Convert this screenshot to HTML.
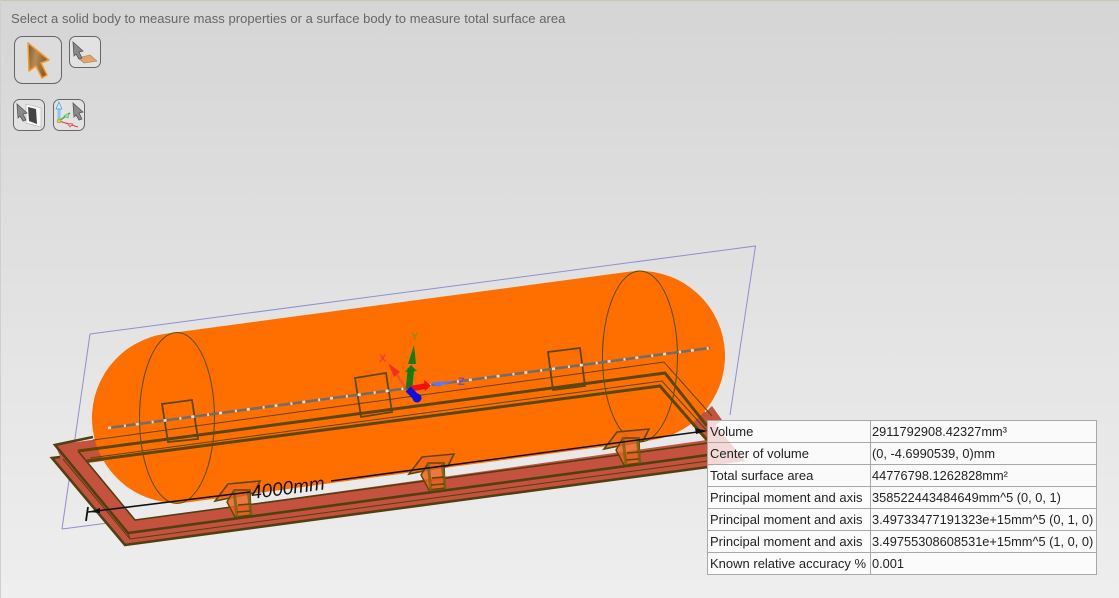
<!DOCTYPE html>
<html><head><meta charset="utf-8">
<style>
html,body{margin:0;padding:0}
body{width:1119px;height:598px;overflow:hidden;position:relative;background:linear-gradient(#d5d5d5 0,#dedede 35%,#e6e6e6 65%,#eeeeee 100%);font-family:"Liberation Sans",sans-serif}
#edge{position:absolute;left:0;top:0;width:1119px;height:1px;background:#c9c5ae}
#edgel{position:absolute;left:0;top:0;width:1px;height:598px;background:#d0d0c8}
#msg{position:absolute;left:11px;top:11px;font-size:13px;color:#666;white-space:nowrap;letter-spacing:.04px}
svg{position:absolute;left:0;top:0}
table{position:absolute;left:707px;top:420px;width:390px;border-collapse:collapse;table-layout:fixed;background:rgba(255,255,255,.78);font-size:13px;color:#222}
td{border:1px solid #a8a8a8;padding:1px 0 0 2px;box-sizing:border-box;height:22px;white-space:nowrap;overflow:hidden;line-height:20px}
td:first-child{width:163px}
td+td{font-size:12.8px;padding-left:1px}
</style></head><body>
<div id="edge"></div><div id="edgel"></div>
<div id="msg">Select a solid body to measure mass properties or a surface body to measure total surface area</div>
<svg width="1119" height="598" viewBox="0 0 1119 598">
<defs>
<linearGradient id="ag" x1="0" y1="0" x2="1" y2="0.3"><stop offset="0" stop-color="#7a5a30"/><stop offset=".45" stop-color="#b98a52"/><stop offset="1" stop-color="#80592c"/></linearGradient>
<g id="br">
<path d="M228 484 L260 481 L254 493 L215 501 Z" fill="rgba(240,105,20,.85)" stroke="#5c4700" stroke-width="1.600"/>
<path d="M227 502 L235 517 L251 515 L250 490 L234 490 Z" fill="rgba(235,100,30,.85)" stroke="#5c4700" stroke-width="1.400"/>
<path d="M234 490 L237 517 M248 489 L251 515" fill="none" stroke="#7a6010" stroke-width="3" opacity=".8"/>
<path d="M238 505 L250 504 M237 512 L250 511" fill="none" stroke="#5c4700" stroke-width="1.500"/>
</g></defs>
<!-- buttons -->
<g fill="none" stroke="#666" stroke-width="1">
<rect x="14.500" y="36.500" width="47" height="47" rx="8" fill="#dcdcdc"/>
<rect x="69.500" y="36.500" width="31" height="31" rx="6" fill="#e2e2e2"/>
<rect x="13.500" y="99.500" width="31" height="31" rx="6" fill="#e2e2e2"/>
<rect x="53.500" y="99.500" width="31" height="31" rx="6" fill="#e2e2e2"/>
</g>
<path d="M28 43 L49 60 L41 63 L47 75 L42 78 L36 66 L29 71 Z" fill="url(#ag)" stroke="#f29a2e" stroke-width="1.500" stroke-linejoin="round"/>
<path d="M78 58 L90 55 L97 61 L84 63 Z" fill="#e0a66c" stroke="#b08050" stroke-width=".6"/>
<path d="M73 42 L83 51 L79 52 L82 58 L79 59 L76 54 L74 56 Z" fill="#8a8a8a" stroke="#555" stroke-width=".8"/>
<path d="M26 104 L41 108 L41 127 L26 123 Z" fill="#fafafa" stroke="#aaa" stroke-width=".6"/>
<path d="M28 107 L36 109 L37 124 L29 121 Z" fill="#444"/>
<path d="M17 104 L27 113 L23 114 L26 120 L23 121 L20 116 L18 118 Z" fill="#8a8a8a" stroke="#555" stroke-width=".8"/>
<path d="M59 120 L59 107" stroke="#4a9bd8" stroke-width="2.500" fill="none"/>
<path d="M59 120 L59 107" stroke="#d8eefa" stroke-width="1" fill="none"/>
<path d="M56 109 L59 102 L62 109 Z" fill="#cfe8f8" stroke="#4a9bd8" stroke-width=".7"/>
<path d="M59 121 L70 113" stroke="#48b050" stroke-width="1.500" fill="none"/>
<path d="M64 116 L69 113 L68 118 Z" fill="#a8e0a8" stroke="#48b050" stroke-width=".6"/>
<path d="M59 121 L78 127" stroke="#d84040" stroke-width="1" fill="none"/>
<path d="M67 123 L73 124 L70 127 Z" fill="#f0a8a8" stroke="#d84040" stroke-width=".6"/>
<circle cx="59" cy="121" r="2" fill="#e6d020" stroke="#887" stroke-width=".5"/>
<path d="M73 103 L83 112 L79 113 L82 119 L79 120 L76 115 L74 117 Z" fill="#8a8a8a" stroke="#555" stroke-width=".8"/>

<!-- plane -->
<path d="M90 334 L755.500 246 L730 415 M62 529 L90 334 M62 529 L108 523" fill="none" stroke="#8f8fd0" stroke-width="1"/>

<!-- frame plates -->
<path fill-rule="evenodd" d="M55 445 L664 362 L745 461 L125 545 L52 458 L60 456 Z M88 463 L660 386 L707 440 L135 520 Z" fill="#c4523f"/>
<g fill="none" stroke="#4f4010">
<path d="M60 457 L52 458 L125 545 L708 467" stroke-width="2.600"/>
<path d="M93 437 L55 445 L128 533 L708 455" stroke-width="2.600"/>
<path d="M63 459 L130 539 L708 461 M128 533 L130 539" stroke-width="1"/>
<path d="M78 451 L135 520 L708 443" stroke-width="1.600"/>
</g>

<!-- capsule -->
<path d="M177 418 L640 356" stroke="#ff6f00" stroke-width="170" stroke-linecap="round" fill="none"/>
<path d="M696 421 L712 406 L722 420 L707 432 Z" fill="#c4523f"/>

<!-- lines over capsule -->
<g fill="none" stroke="#5c4700">
<path d="M78 451 L665 373 L707 426" stroke-width="3"/>
<path d="M87 461 L660 386 L707 440" stroke-width="3"/>
<path d="M93 440 L664 362 L712 416" stroke-width="1"/>
<path d="M90 458 L662 381 L708 432" stroke-width="1"/>
<ellipse cx="177" cy="418" rx="37.500" ry="85.500" stroke="#5e5000" stroke-width="1.100"/>
<ellipse cx="640" cy="356.500" rx="37.500" ry="85.500" stroke="#5e5000" stroke-width="1.100"/>
<path d="M162 404 L192 400 L198 439 L168 442 Z" stroke-width="1.800"/>
<path d="M355 378 L386 373 L392 412 L361 417 Z" stroke-width="1.800"/>
<path d="M548 352 L580 348 L585 386 L553 390 Z" stroke-width="1.800"/>
</g>

<!-- axis -->
<path d="M108 428 L710 348" stroke="#6e6e6e" stroke-width="2.600" fill="none"/>
<path d="M108 428 L710 348" stroke="#eedfc8" stroke-width="2.600" fill="none" stroke-dasharray="3 13 2 10"/>

<!-- brackets -->
<use href="#br"/>
<use href="#br" transform="translate(194 -27)"/>
<use href="#br" transform="translate(389 -52)"/>

<!-- dimension -->
<path d="M88 512 L250 492 M331 481 L705 431" stroke="#111" stroke-width="1.500" fill="none"/>
<path d="M88 507 L86 521" stroke="#111" stroke-width="1.800"/>
<path d="M89 512 L100 508 L100 513 Z M707 431 L695 428 L696 434 Z" fill="#111"/>
<text x="252" y="499" transform="rotate(-7.500 252 499)" font-family="Liberation Sans, sans-serif" font-style="italic" font-size="19" fill="#111">4000mm</text>

<!-- triad -->
<path d="M392 368 L406 388" stroke="#f2542a" stroke-width="2.500" fill="none"/>
<path d="M388 363 L400 372 L394 377 Z" fill="#f03020"/>
<path d="M409 389 L411 368" stroke="#0e7f10" stroke-width="6.500" fill="none"/>
<path d="M405 372 L411 365 L417 371 Z" fill="#0e7f10"/>
<path d="M414 345 L408 364 L416 364 Z" fill="#0e7f10"/>
<path d="M409 389 L426 386" stroke="#f01010" stroke-width="5.500" fill="none"/>
<path d="M424 380 L431 385.500 L425 391 Z" fill="#f01010"/>
<path d="M432 382 L455 381 L437 387 Z" fill="#5a78f0"/>
<path d="M408 389 L417 398" stroke="#0c10e0" stroke-width="7" fill="none"/>
<circle cx="417" cy="398" r="4.500" fill="#0c10e0"/>
<g font-family="Liberation Sans, sans-serif" font-size="11" font-weight="bold">
<text x="379" y="362" fill="#f0402a">X</text>
<text x="411" y="340" fill="#8f8a18">Y</text>
<text x="458" y="385" fill="#6a50c8">Z</text>
</g>
</svg>
<table>
<tr><td>Volume</td><td>2911792908.42327mm³</td></tr>
<tr><td>Center of volume</td><td>(0, -4.6990539, 0)mm</td></tr>
<tr><td>Total surface area</td><td>44776798.1262828mm²</td></tr>
<tr><td>Principal moment and axis</td><td>358522443484649mm^5 (0, 0, 1)</td></tr>
<tr><td>Principal moment and axis</td><td>3.49733477191323e+15mm^5 (0, 1, 0)</td></tr>
<tr><td>Principal moment and axis</td><td>3.49755308608531e+15mm^5 (1, 0, 0)</td></tr>
<tr><td>Known relative accuracy %</td><td>0.001</td></tr>
</table>
</body></html>
